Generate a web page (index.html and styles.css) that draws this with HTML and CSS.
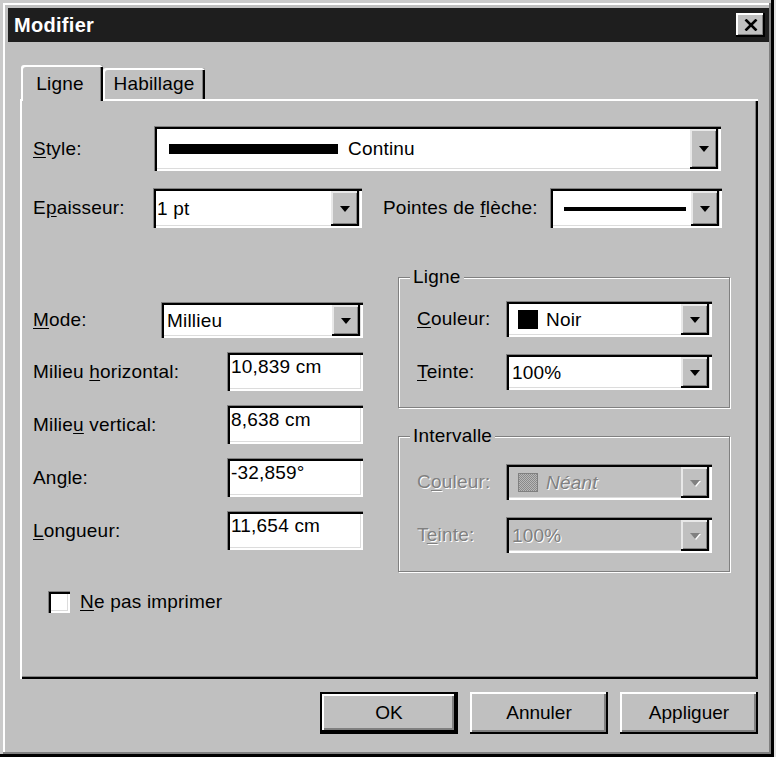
FILE: index.html
```html
<!DOCTYPE html>
<html lang="fr">
<head>
    <meta charset="UTF-8">
    <title>Modifier</title>
    <link rel="stylesheet" href="styles.css">
</head>
<body>

    <div class="window">
        <div class="titlebar">
            <span class="title">Modifier</span>
            <button class="close">
                <svg width="14" height="12" viewBox="0 0 14 12"><path d="M1.5 0.5 L12.5 11.5 M12.5 0.5 L1.5 11.5" stroke="#000" stroke-width="2.6"/></svg>
            </button>
        </div>

        <div class="tabs">
            <div class="tab active">Ligne</div>
            <div class="tab">Habillage</div>
        </div>

        <div class="panel">
            <div class="row row-style">
                <label class="lbl w121"><u>S</u>tyle:</label>
                <div class="combo w567">
                    <div class="value"><span class="stroke"></span>Continu</div>
                    <span class="drop"></span>
                </div>
            </div>

            <div class="row row-width">
                <label class="lbl w120">E<u>p</u>aisseur:</label>
                <div class="combo w209">
                    <div class="value">1 pt</div>
                    <span class="drop"></span>
                </div>
                <label class="lbl arrows">Pointes de <u>f</u>lèche:</label>
                <div class="combo w172">
                    <div class="value"><span class="stroke thin"></span></div>
                    <span class="drop"></span>
                </div>
            </div>

            <div class="lower">
                <div class="col-left">
                    <div class="frow mode">
                        <label class="lbl"><u>M</u>ode:</label>
                        <div class="combo w202">
                            <div class="value pad">Millieu</div>
                            <span class="drop"></span>
                        </div>
                    </div>
                    <div class="frow">
                        <label class="lbl">Milieu <u>h</u>orizontal:</label>
                        <div class="field">10,839 cm</div>
                    </div>
                    <div class="frow">
                        <label class="lbl">Milie<u>u</u> vertical:</label>
                        <div class="field">8,638 cm</div>
                    </div>
                    <div class="frow">
                        <label class="lbl">An<u>g</u>le:</label>
                        <div class="field">-32,859°</div>
                    </div>
                    <div class="frow">
                        <label class="lbl"><u>L</u>ongueur:</label>
                        <div class="field">11,654 cm</div>
                    </div>
                </div>

                <div class="col-right">
                    <div class="group">
                        <div class="group-title">Ligne</div>
                        <div class="grow">
                            <label class="lbl"><u>C</u>ouleur:</label>
                            <div class="combo w206">
                                <div class="value pad"><span class="swatch black"></span>Noir</div>
                                <span class="drop"></span>
                            </div>
                        </div>
                        <div class="grow">
                            <label class="lbl"><u>T</u>einte:</label>
                            <div class="combo w206">
                                <div class="value pad">100%</div>
                                <span class="drop"></span>
                            </div>
                        </div>
                    </div>

                    <div class="group gap">
                        <div class="group-title">Intervalle</div>
                        <div class="grow">
                            <label class="lbl off">C<u>o</u>uleur:</label>
                            <div class="combo w206 disabled">
                                <div class="value pad"><span class="swatch dots"></span><i>Néant</i></div>
                                <span class="drop"></span>
                            </div>
                        </div>
                        <div class="grow">
                            <label class="lbl off">T<u>e</u>inte:</label>
                            <div class="combo w206 disabled">
                                <div class="value pad">100%</div>
                                <span class="drop"></span>
                            </div>
                        </div>
                    </div>
                </div>
            </div>

            <label class="check"><span class="box"></span><span><u>N</u>e pas imprimer</span></label>
        </div>

        <div class="buttons">
            <button class="btn default">OK</button>
            <button class="btn">Annuler</button>
            <button class="btn">Appliguer</button>
        </div>
    </div>

</body>
</html>
```

FILE: styles.css
```css
* {
    box-sizing: border-box;
}
body {
    margin: 0;
    background-color: #e2e2e2;
    font-family: "Liberation Sans", Arial, sans-serif;
    font-size: 19px;
    letter-spacing: 0.2px;
    line-height: 20px;
    color: #000;
}
u {
    text-underline-offset: 2px;
}

/* window frame */
.window {
    width: 774px;
    height: 757px;
    padding: 8px 5px 8px 8px;
    background-color: #c0c0c0;
    box-shadow: inset -3px -3px #000, inset 3px 3px #cacaca,
                inset -5px -5px #808080, inset 5px 5px #fff;
}
.titlebar {
    height: 34px;
    display: flex;
    align-items: center;
    justify-content: space-between;
    padding: 0 4px 0 6px;
    background-color: #1e1e1e;
}
.title {
    color: #fff;
    font-weight: bold;
    font-size: 20px;
    letter-spacing: 0.3px;
}
.close {
    width: 29px;
    height: 24px;
    padding: 0;
    border: none;
    display: flex;
    align-items: center;
    justify-content: center;
    background-color: #c0c0c0;
    box-shadow: inset -2px -2px #000, inset 2px 2px #fff, inset -3px -3px #808080;
}

/* tabs */
.tabs {
    display: flex;
    align-items: flex-end;
    margin: 23px 0 0 13px;
    height: 34px;
}
.tab {
    height: 31px;
    width: 102px;
    padding-top: 6px;
    text-align: center;
    background-color: #c0c0c0;
    border-radius: 3px 3px 0 0;
    box-shadow: inset 2px 2px #fff, inset -2px 0 #000, inset -3px 0 #808080;
}
.tab.active {
    width: 82px;
    height: 36px;
    padding: 9px 4px 0 0;
    margin-bottom: -2px;
    position: relative;
    z-index: 1;
}

/* tab page */
.panel {
    height: 580px;
    margin: 0 11px 0 12px;
    padding: 27px 0 0 13px;
    background-color: #c0c0c0;
    box-shadow: inset 2px 2px #fff, inset -2px -2px #000, inset -3px -3px #808080;
}
.row {
    display: flex;
    align-items: center;
}
.row-style {
    height: 45px;
}
.row-width {
    height: 40px;
    margin-top: 17px;
}
.lbl {
    white-space: nowrap;
}
.lbl.off {
    color: #808080;
    text-shadow: 1px 1px #fff;
}
.w121 { width: 121px; }
.w120 { width: 120px; }
.arrows {
    width: 167px;
    margin-left: 21px;
}

/* sunken fields */
.combo, .field, .box {
    background-color: #fff;
    box-shadow: inset 1px 1px #808080, inset 3px 3px #000,
                inset -2px -2px #fff, inset -3px -3px #dcdcdc;
}
.combo {
    height: 100%;
    display: flex;
    padding: 3px 3px 2px 3px;
}
.combo.disabled {
    background-color: #c0c0c0;
    color: #808080;
    text-shadow: 1px 1px #fff;
}
.w567 { width: 567px; }
.w209 { width: 209px; }
.w172 { width: 172px; }
.w202 { width: 202px; }
.w206 { width: 206px; }
.value {
    flex: 1;
    min-width: 0;
    display: flex;
    align-items: center;
    padding-left: 1px;
    white-space: nowrap;
    overflow: hidden;
}
.value.pad {
    padding-left: 3px;
}
.stroke {
    flex-shrink: 0;
    width: 169px;
    height: 10px;
    margin: 0 10px 0 11px;
    background-color: #000;
}
.stroke.thin {
    width: 122px;
    height: 4px;
    margin: 0 0 0 10px;
}
.drop {
    flex-shrink: 0;
    width: 28px;
    display: flex;
    align-items: center;
    justify-content: center;
    background-color: #c0c0c0;
    box-shadow: inset -2px -2px #000, inset 2px 2px #e8e8e8, inset -3px -3px #808080;
}
.drop::after {
    content: "";
    border-left: 5px solid transparent;
    border-right: 5px solid transparent;
    border-top: 6px solid #000;
}
.disabled .drop::after {
    border-top-color: #808080;
    filter: drop-shadow(1px 1px 0 #fff);
}
.swatch {
    width: 20px;
    height: 19px;
    margin: 0 8px 0 6px;
}
.swatch.black {
    background-color: #000;
}
.swatch.dots {
    border: 1px solid #808080;
    background: repeating-conic-gradient(#8a8a8a 0 25%, #b8b8b8 0 50%) 0 0 / 2px 2px;
}

/* lower part: position fields and group boxes */
.lower {
    display: flex;
    gap: 35px;
    margin-top: 38px;
}
.col-left {
    width: 330px;
    padding-top: 36px;
    display: flex;
    flex-direction: column;
    gap: 14px;
}
.frow {
    height: 39px;
    display: flex;
    align-items: center;
    justify-content: space-between;
}
.frow.mode {
    height: 36px;
}
.field {
    width: 136px;
    height: 100%;
    padding: 5px 0 0 4px;
}
.col-right {
    width: 332px;
}
.group {
    margin-top: 11px;
    padding: 0 17px 17px 18px;
    border: 1px solid #808080;
    box-shadow: inset 1px 1px #fff, 1px 1px #fff;
}
.group.gap {
    margin-top: 28px;
    padding-bottom: 18px;
}
.group-title {
    display: table;
    margin: -11px 0 0 -7px;
    padding: 0 3px;
    background-color: #c0c0c0;
}
.grow {
    height: 36px;
    margin-top: 17px;
    display: flex;
    align-items: center;
    justify-content: space-between;
}
.group .grow:nth-child(2) {
    margin-top: 14px;
}
.group.gap .grow:nth-child(2) {
    margin-top: 18px;
}

.check {
    display: flex;
    align-items: center;
    gap: 10px;
    margin: 19px 0 0 15px;
}
.box {
    width: 22px;
    height: 22px;
}

/* dialog buttons */
.buttons {
    display: flex;
    justify-content: flex-end;
    gap: 12px;
    margin: 13px 11px 0 0;
}
.btn {
    width: 138px;
    height: 42px;
    border: none;
    font: inherit;
    color: #000;
    background-color: #c0c0c0;
    box-shadow: inset -2px -2px #000, inset 2px 2px #fff, inset -4px -4px #808080;
}
.btn.default {
    box-shadow: inset 0 0 0 2px #000, inset -4px -4px #000,
                inset 4px 4px #fff, inset -6px -6px #808080;
}
```
